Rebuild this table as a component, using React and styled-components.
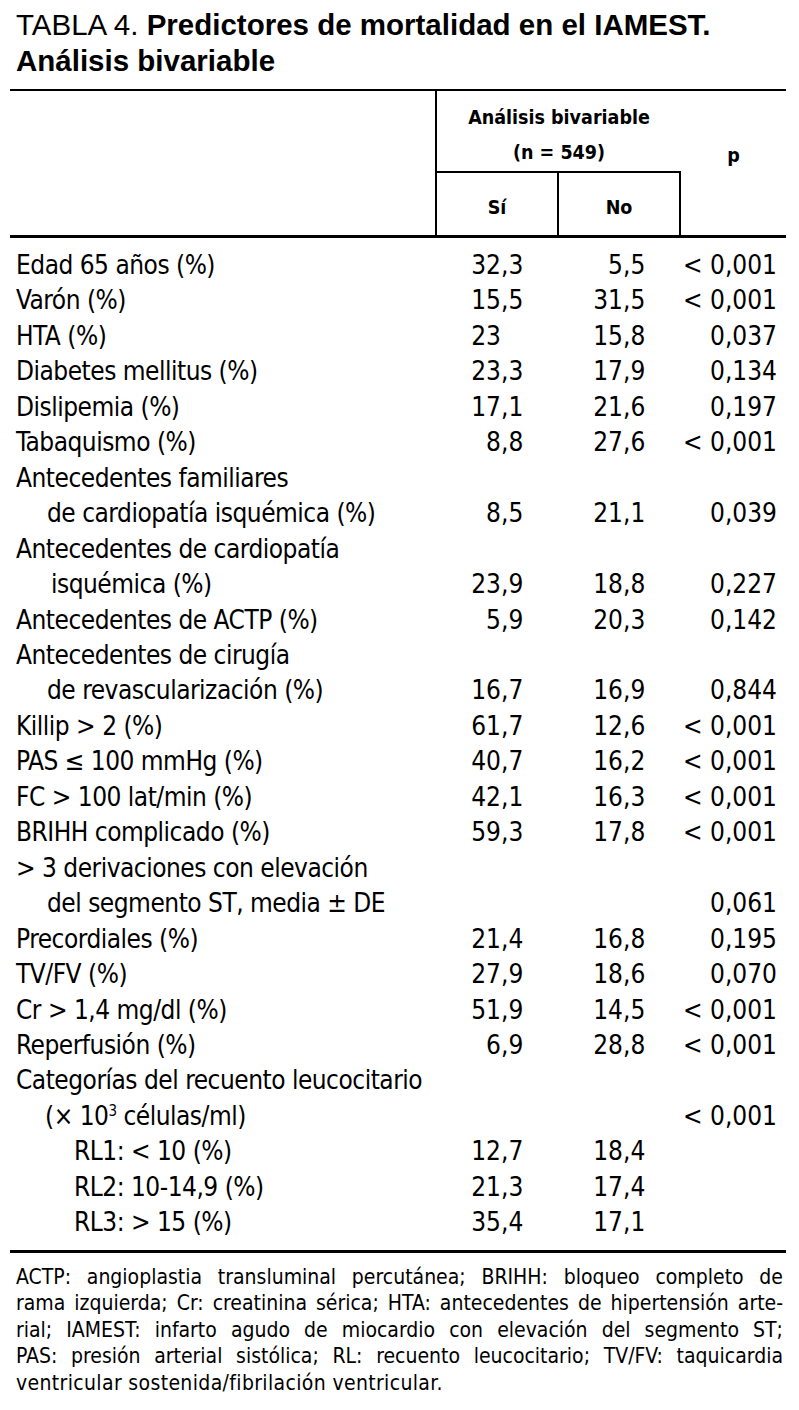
import React from "react";
import styled, { createGlobalStyle } from "styled-components";

const NARROW = `"DejaVu Sans Condensed", "Liberation Sans", sans-serif`;

const GlobalStyle = createGlobalStyle`
  html, body { margin: 0; padding: 0; background: #fff; }
  * { box-sizing: border-box; }
`;

const Page = styled.div`
  width: 786px;
  padding: 7px 0 20px 10px;
  color: #000;
`;

const Title = styled.h1`
  margin: 0;
  padding-left: 6px;
  font-family: "Liberation Sans", Arial, sans-serif;
  font-weight: 400;
  font-size: 29.5px;
  line-height: 36px;
`;

const Bold = styled.span`
  font-weight: 700;
`;

const Table = styled.div`
  margin-top: 10px;
  border-top: 2px solid #000;
  font-family: ${NARROW};
`;

const COLS = "427px 122px 122px 105px";

const Head = styled.div`
  display: grid;
  grid-template-columns: ${COLS};
  grid-template-rows: 82px 62px;
  border-bottom: 3px solid #000;
  font-weight: 700;
  font-size: 19.5px;
  line-height: 35px;
`;

const HeadBlank = styled.div`
  grid-column: 1;
  grid-row: 1 / 3;
  border-right: 2px solid #000;
`;

const HeadGroup = styled.div`
  grid-column: 2 / 4;
  grid-row: 1;
  border-bottom: 2px solid #000;
  display: flex;
  flex-direction: column;
  align-items: center;
  justify-content: center;
  padding-top: 8px;
`;

const HeadCell = styled.div`
  grid-row: ${(p) => p.$row};
  grid-column: ${(p) => p.$col};
  display: flex;
  align-items: center;
  justify-content: center;
  padding: ${(p) => p.$pad || "0"};
  border-right: ${(p) => (p.$divider ? "2px solid #000" : "none")};
`;

const Body = styled.div`
  padding: 10px 0 9px;
  font-size: 26px;
  line-height: 35.45px;
`;

const Row = styled.div`
  display: grid;
  grid-template-columns: ${COLS};
`;

const Label = styled.div`
  padding-left: 6px;
  white-space: nowrap;
  letter-spacing: -0.5px;
`;

const Line = styled.div`
  padding-left: ${(p) => p.$indent || 0}px;
`;

const NumCell = styled.div`
  align-self: end;
  display: flex;
  white-space: nowrap;
`;

const IntPart = styled.span`
  width: 64px;
  text-align: right;
`;

const FracPart = styled.span`
  text-align: left;
`;

const PCell = styled.div`
  align-self: end;
  text-align: right;
  padding-right: 9px;
  white-space: nowrap;
`;

const Sup = styled.sup`
  font-size: 15px;
  line-height: 0;
  vertical-align: 9px;
`;

const Note = styled.div`
  border-top: 3px solid #000;
  padding: 11px 3px 0 6px;
  font-family: ${NARROW};
  font-size: 21px;
  line-height: 26.5px;
`;

const NoteLine = styled.div`
  text-align: justify;
  text-align-last: ${(p) => (p.$last ? "left" : "justify")};
  letter-spacing: ${(p) => (p.$last ? "0.35px" : "0")};
  white-space: nowrap;
`;

function Num({ v }) {
  if (!v) return <NumCell />;
  const [i, f] = v.split(",");
  return (
    <NumCell>
      <IntPart>{i}</IntPart>
      <FracPart>{f !== undefined ? "," + f : ""}</FracPart>
    </NumCell>
  );
}

const rows = [
  { lines: [["Edad 65 años (%)", 0]], si: "32,3", no: "5,5", p: "< 0,001" },
  { lines: [["Varón (%)", 0]], si: "15,5", no: "31,5", p: "< 0,001" },
  { lines: [["HTA (%)", 0]], si: "23", no: "15,8", p: "0,037" },
  { lines: [["Diabetes mellitus (%)", 0]], si: "23,3", no: "17,9", p: "0,134" },
  { lines: [["Dislipemia (%)", 0]], si: "17,1", no: "21,6", p: "0,197" },
  { lines: [["Tabaquismo (%)", 0]], si: "8,8", no: "27,6", p: "< 0,001" },
  {
    lines: [
      ["Antecedentes familiares", 0],
      ["de cardiopatía isquémica (%)", 31],
    ],
    si: "8,5",
    no: "21,1",
    p: "0,039",
  },
  {
    lines: [
      ["Antecedentes de cardiopatía", 0],
      ["isquémica (%)", 35],
    ],
    si: "23,9",
    no: "18,8",
    p: "0,227",
  },
  { lines: [["Antecedentes de ACTP (%)", 0]], si: "5,9", no: "20,3", p: "0,142" },
  {
    lines: [
      ["Antecedentes de cirugía", 0],
      ["de revascularización (%)", 31],
    ],
    si: "16,7",
    no: "16,9",
    p: "0,844",
  },
  { lines: [["Killip > 2 (%)", 0]], si: "61,7", no: "12,6", p: "< 0,001" },
  { lines: [["PAS ≤ 100 mmHg (%)", 0]], si: "40,7", no: "16,2", p: "< 0,001" },
  { lines: [["FC > 100 lat/min (%)", 0]], si: "42,1", no: "16,3", p: "< 0,001" },
  { lines: [["BRIHH complicado (%)", 0]], si: "59,3", no: "17,8", p: "< 0,001" },
  {
    lines: [
      ["> 3 derivaciones con elevación", 0],
      ["del segmento ST, media ± DE", 31],
    ],
    si: "",
    no: "",
    p: "0,061",
  },
  { lines: [["Precordiales (%)", 0]], si: "21,4", no: "16,8", p: "0,195" },
  { lines: [["TV/FV (%)", 0]], si: "27,9", no: "18,6", p: "0,070" },
  { lines: [["Cr > 1,4 mg/dl (%)", 0]], si: "51,9", no: "14,5", p: "< 0,001" },
  { lines: [["Reperfusión (%)", 0]], si: "6,9", no: "28,8", p: "< 0,001" },
  {
    lines: [
      ["Categorías del recuento leucocitario", 0],
      [
        <>
          (× 10<Sup>3</Sup> células/ml)
        </>,
        29,
      ],
    ],
    si: "",
    no: "",
    p: "< 0,001",
  },
  { lines: [["RL1: < 10 (%)", 58]], si: "12,7", no: "18,4", p: "" },
  { lines: [["RL2: 10-14,9 (%)", 58]], si: "21,3", no: "17,4", p: "" },
  { lines: [["RL3: > 15 (%)", 58]], si: "35,4", no: "17,1", p: "" },
];

const noteLines = [
  "ACTP: angioplastia transluminal percutánea; BRIHH: bloqueo completo de",
  "rama izquierda; Cr: creatinina sérica; HTA: antecedentes de hipertensión arte-",
  "rial; IAMEST: infarto agudo de miocardio con elevación del segmento ST;",
  "PAS: presión arterial sistólica; RL: recuento leucocitario; TV/FV: taquicardia",
  "ventricular sostenida/fibrilación ventricular.",
];

export default function App() {
  return (
    <>
      <GlobalStyle />
      <Page>
        <Title>
          TABLA 4. <Bold>Predictores de mortalidad en el IAMEST.</Bold>
          <br />
          <Bold>Análisis bivariable</Bold>
        </Title>
        <Table>
          <Head>
            <HeadBlank />
            <HeadGroup>
              <div>Análisis bivariable</div>
              <div>(n = 549)</div>
            </HeadGroup>
            <HeadCell $row={2} $col={2} $divider $pad="6px 0 0">
              Sí
            </HeadCell>
            <HeadCell $row={2} $col={3} $divider $pad="6px 0 0">
              No
            </HeadCell>
            <HeadCell $row="1 / 3" $col={4} $pad="0 0 16px">
              p
            </HeadCell>
          </Head>
          <Body>
            {rows.map((r, idx) => (
              <Row key={idx}>
                <Label>
                  {r.lines.map(([t, ind], j) => (
                    <Line key={j} $indent={ind}>
                      {t}
                    </Line>
                  ))}
                </Label>
                <Num v={r.si} />
                <Num v={r.no} />
                <PCell>{r.p}</PCell>
              </Row>
            ))}
          </Body>
        </Table>
        <Note>
          {noteLines.map((l, i) => (
            <NoteLine key={i} $last={i === noteLines.length - 1}>
              {l}
            </NoteLine>
          ))}
        </Note>
      </Page>
    </>
  );
}
